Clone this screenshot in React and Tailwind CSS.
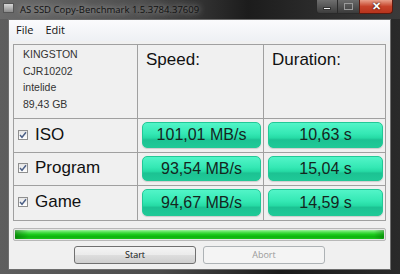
import React from 'react';

const pill =
  'h-full rounded-[5px] border border-[#22c896] bg-[linear-gradient(180deg,#52f5c8_0%,#34e8b4_45%,#26dba5_62%,#1cc293_70%,#1fc997_100%)] shadow-[0_1px_1px_rgba(0,0,0,0.15)] flex items-center justify-center text-[16px] text-[#14261e]';

function Check() {
  return (
    <span className="w-[10px] h-[10px] border border-[#8f8f8f] bg-[linear-gradient(180deg,#e6e6e6,#ffffff)] flex items-center justify-center shrink-0">
      <svg width="8" height="8" viewBox="0 0 8 8">
        <path d="M1 4 L3 6.3 L7 1.2" fill="none" stroke="#4b5f86" strokeWidth="1.4" />
      </svg>
    </span>
  );
}

function Row({ label, speed, dur, h }) {
  return (
    <div className={`flex border-t border-[#a0a0a0] ${h}`}>
      <div className="w-[124px] border-r border-[#a0a0a0] flex items-center gap-[7px] pl-[4px] pb-[2px]">
        <Check />
        <span className="text-[17px] text-[#111]">{label}</span>
      </div>
      <div className="w-[126px] border-r border-[#a0a0a0] pt-[3px] pl-[4px] pr-[2px] pb-[4px]">
        <div className={pill}>{speed}</div>
      </div>
      <div className="flex-1 pt-[3px] pl-[4px] pr-[2px] pb-[4px]">
        <div className={pill}>{dur}</div>
      </div>
    </div>
  );
}

export default function App() {
  return (
    <div
      className="w-[400px] h-[274px] flex flex-col overflow-hidden bg-[linear-gradient(90deg,#5e5e5e_0%,#4a4a4a_40%,#1a1a1a_70%,#2a2a2a_100%)]"
      style={{ fontFamily: '"Liberation Sans", Arial, sans-serif' }}
    >
      {/* title bar */}
      <div className="h-[19px] flex items-start shrink-0 bg-[linear-gradient(90deg,#6a6a6a_0%,#4e4e4e_35%,#1c1c1c_62%,#2c2c2c_80%,#3a3a3a_100%)]">
        <div className="w-[11px] h-[10px] ml-[3px] mt-[3px] bg-[linear-gradient(180deg,#d8d8d8,#8a8a8a)] border border-[#555]" />
        <div
          className="ml-[6px] mt-[3px] text-[9.5px] text-[#101010] [text-shadow:0_0_6px_rgba(220,220,220,0.95)]"
          style={{ fontFamily: '"Open Sans", "Liberation Sans", sans-serif' }}
        >
          AS SSD Copy-Benchmark 1.5.3784.37609
        </div>
        <div className="ml-auto mr-[7px] flex h-[14px]">
          <div className="w-[22px] rounded-bl-[4px] border border-t-0 border-[#2a2a2a] bg-[linear-gradient(180deg,#6e6e6e,#3d3d3d)] flex items-end justify-center pb-[3px]">
            <div className="w-[8px] h-[3px] bg-[#eee] border border-[#333]" />
          </div>
          <div className="w-[21px] border-b border-[#2a2a2a] bg-[linear-gradient(180deg,#6a6a6a,#3b3b3b)] flex items-center justify-center">
            <div className="w-[9px] h-[7px] border border-[#9a9a9a]" />
          </div>
          <div className="w-[34px] rounded-br-[4px] border border-t-0 border-[#5a1a10] bg-[linear-gradient(180deg,#e8a08a,#c7432a_50%,#b8331c)] flex items-center justify-center text-[#fff] text-[11px] font-bold [text-shadow:0_0_2px_#000]">
            ✕
          </div>
        </div>
      </div>

      {/* client area */}
      <div className="flex-1 flex ml-[8px] mr-[9px] mb-[4px] border border-[#6e6e6e] bg-[#f0f0f0] flex-col">
        <div className="h-[21px] flex items-center gap-[12px] pl-[7px] text-[11px] text-[#111] bg-[linear-gradient(180deg,#fbfbfd,#eef0f4)]"
          style={{ fontFamily: '"Open Sans", "Liberation Sans", sans-serif' }}>
          <span>File</span>
          <span>Edit</span>
        </div>

        <div className="mx-[4px] mt-[3px] border border-[#a0a0a0] flex flex-col">
          <div className="flex h-[73px]">
            <div className="w-[124px] border-r border-[#a0a0a0] pl-[9px] pt-[1px] text-[10.5px] text-[#333] leading-[16.5px]">
              <div>KINGSTON</div>
              <div>CJR10202</div>
              <div>intelide</div>
              <div>89,43 GB</div>
            </div>
            <div className="w-[126px] border-r border-[#a0a0a0] pl-[8px] pt-[2px] text-[17px] text-[#111]">Speed:</div>
            <div className="flex-1 pl-[8px] pt-[2px] text-[17px] text-[#111]">Duration:</div>
          </div>
          <Row label="ISO" speed="101,01 MB/s" dur="10,63 s" h="h-[34px]" />
          <Row label="Program" speed="93,54 MB/s" dur="15,04 s" h="h-[33px]" />
          <Row label="Game" speed="94,67 MB/s" dur="14,59 s" h="h-[35px]" />
        </div>

        <div className="mx-[4px] mt-[7px] h-[13px] rounded-[2px] border border-[#b8b8b8] p-[1px] bg-[#e6e6e6]">
          <div className="h-full rounded-[1px] bg-[linear-gradient(180deg,#9cf39c_0%,#4fe04f_25%,#1ccb1c_50%,#0fb20f_75%,#18c418_100%)] relative">
            <div className="absolute inset-y-0 left-0 w-[14px] bg-[linear-gradient(90deg,rgba(0,80,0,0.45),rgba(0,80,0,0))]" />
            <div className="absolute inset-y-0 right-0 w-[10px] bg-[linear-gradient(270deg,rgba(0,80,0,0.35),rgba(0,80,0,0))]" />
          </div>
        </div>

        <div className="flex justify-center gap-[7px] mt-[5px] text-[9px]"
          style={{ fontFamily: '"Open Sans", "Liberation Sans", sans-serif' }}>
          <div className="w-[122px] h-[18px] rounded-[3px] border border-[#707070] bg-[linear-gradient(180deg,#f4f4f4_0%,#ebebeb_48%,#dddddd_52%,#cfcfcf_100%)] flex items-center justify-center text-[#111]">
            Start
          </div>
          <div className="w-[122px] h-[18px] rounded-[3px] border border-[#adb2b5] bg-[#f4f4f4] flex items-center justify-center text-[#9a9a9a]">
            Abort
          </div>
        </div>
      </div>
    </div>
  );
}
